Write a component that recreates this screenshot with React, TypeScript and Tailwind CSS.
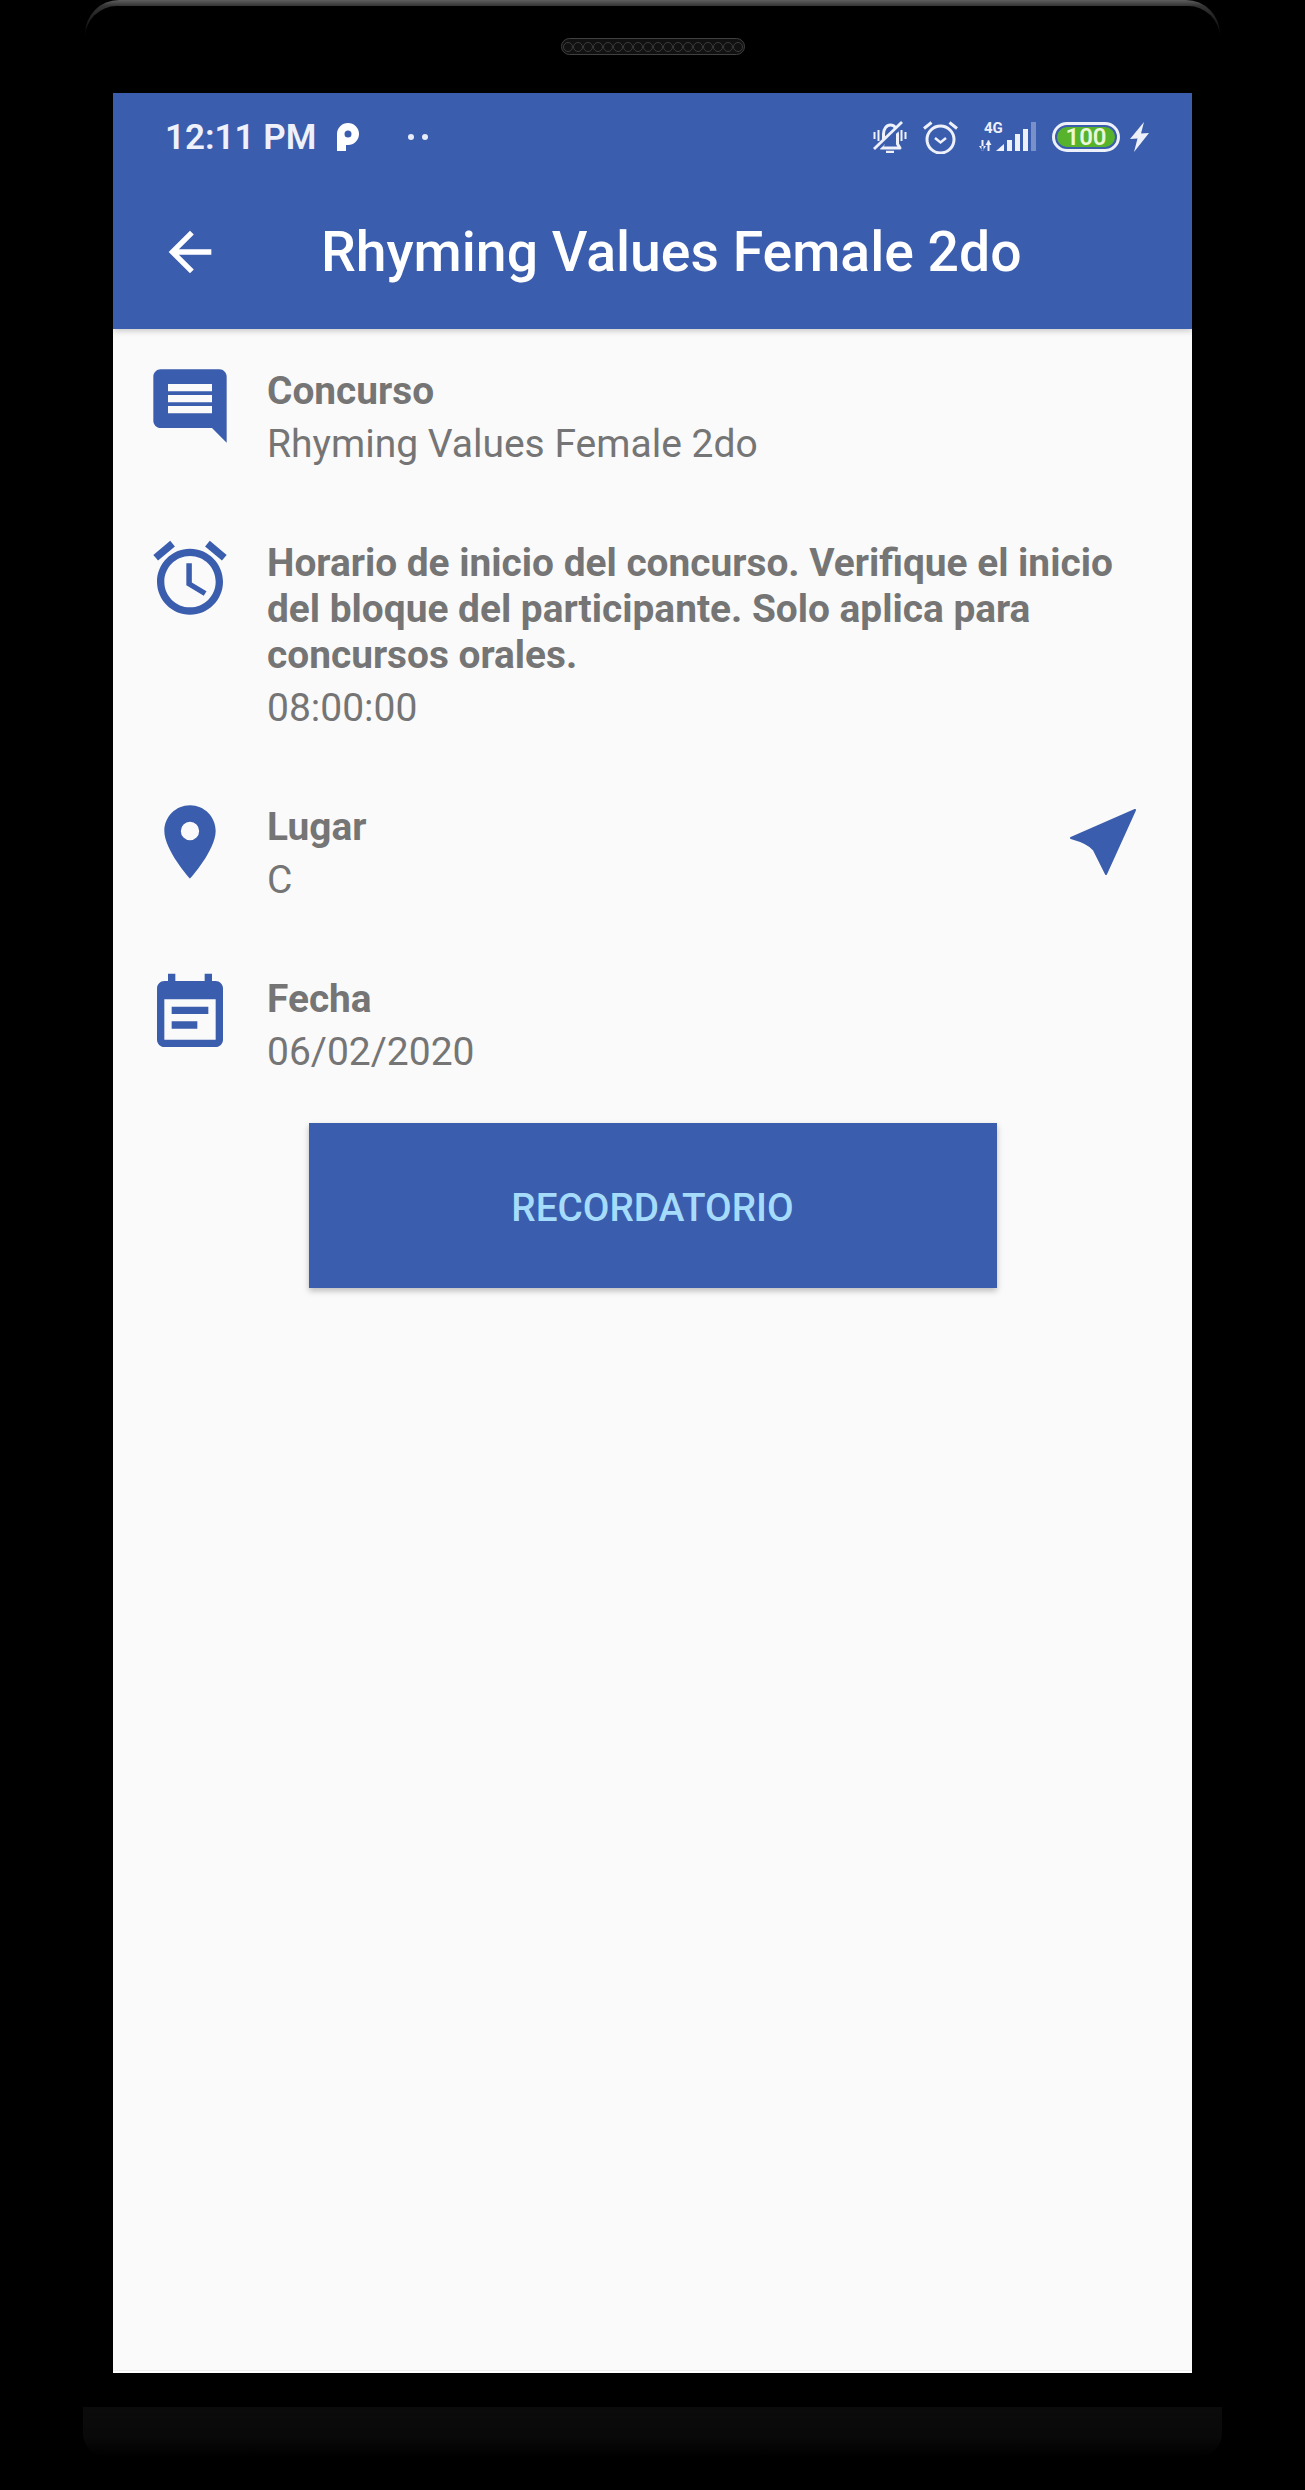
import React from 'react';

const BLUE = '#3b5dae';

const MaterialIcon: React.FC<{ d: string }> = ({ d }) => (
  <svg viewBox="0 0 24 24" className="w-[88px] h-[88px] shrink-0 -mt-[5px]" fill={BLUE}>
    <path d={d} />
  </svg>
);

const icons = {
  message: 'M20 2H4c-1.1 0-2 .9-2 2v12c0 1.1.9 2 2 2h14l4 4V4c0-1.1-.9-2-2-2zm-2 12H6v-2h12v2zm0-3H6V9h12v2zm0-3H6V6h12v2z',
  alarm: 'M22 5.72l-4.6-3.86-1.29 1.53 4.6 3.86L22 5.72zM7.88 3.39L6.6 1.86 2 5.71l1.29 1.53 4.59-3.85zM12.5 8H11v6l4.75 2.85.75-1.23-4-2.37V8zM12 4c-4.97 0-9 4.03-9 9s4.03 9 9 9 9-4.03 9-9-4.03-9-9-9zm0 16c-3.87 0-7-3.13-7-7s3.13-7 7-7 7 3.13 7 7-3.13 7-7 7z',
  place: 'M12 2C8.13 2 5 5.13 5 9c0 5.25 7 13 7 13s7-7.75 7-13c0-3.87-3.13-7-7-7zm0 9.5a2.5 2.5 0 0 1 0-5 2.5 2.5 0 0 1 0 5z',
  event: 'M17 10H7v2h10v-2zm2-7h-1V1h-2v2H8V1H6v2H5c-1.11 0-1.99.9-1.99 2L3 19c0 1.1.89 2 2 2h14c1.1 0 2-.9 2-2V5c0-1.1-.9-2-2-2zm0 16H5V8h14v11zm-5-5H7v2h7v-2z',
};

const InfoRow: React.FC<{ icon: string; title: string; value: string; children?: React.ReactNode }> = ({ icon, title, value, children }) => (
  <div className="flex items-start">
    <MaterialIcon d={icon} />
    <div className="ml-[33px] flex-1 pt-[1px]">
      <p className="text-[38.850px] leading-[46px] font-bold text-[#757575]">{title}</p>
      <p className="mt-[4px] text-[39px] leading-[52px] font-normal text-[#757575]">{value}</p>
    </div>
    {children}
  </div>
);

const StatusBar = () => (
  <div className="flex h-[88px] items-center pl-[52px] pr-[43px] text-white">
    <span className="pt-[2px] text-[35px] font-semibold text-[#eef1fa]">12:11 PM</span>
    <svg viewBox="0 0 22 28" className="ml-[21px] h-[28px] w-[22px]" fill="#fff">
      <path fillRule="evenodd" d="M0 28V11A11 11 0 1 1 11 22H9V28zM11 7.500a3.500 3.500 0 1 0 0 7 3.500 3.500 0 0 0 0-7z" />
    </svg>
    <div className="ml-[49px] flex gap-[8px]">
      <div className="h-[6px] w-[6px] rounded-full bg-[#e8ecf7]" />
      <div className="h-[6px] w-[6px] rounded-full bg-[#e8ecf7]" />
    </div>
    <div className="ml-auto flex items-center">
      {/* bell muted */}
      <svg viewBox="0 0 34 32" className="h-[32px] w-[34px]" fill="none" stroke="#eef1fa" strokeWidth="3">
        <path d="M8 27l2.500-4V13c0-5 3-9 7-9s7 4 7 9v10l2.500 4z" strokeLinejoin="round" />
        <path d="M13 31h8" strokeWidth="2.500" />
        <path d="M0 31L30 3" stroke={BLUE} strokeWidth="5" />
        <path d="M1 28L29 1" strokeWidth="2.800" />
        <path d="M1.500 11v7M5.500 9v11M28.500 9v11M32.500 11v7" strokeWidth="2" />
      </svg>
      {/* alarm */}
      <svg viewBox="0 0 35 33" className="ml-[16px] h-[33px] w-[35px]" fill="none" stroke="#eef1fa" strokeWidth="3">
        <circle cx="17.500" cy="18.500" r="13.500" />
        <path d="M12 17l5.500 4.500L23 17" strokeWidth="2.500" />
        <path d="M1 7.500L8.500 1.500M34 7.500L26.500 1.500" strokeWidth="3" />
      </svg>
      {/* 4G signal */}
      <svg viewBox="0 0 58 32" className="ml-[20px] h-[32px] w-[58px]" fill="#eef1fa">
        <text x="6" y="11.500" fontFamily="Roboto" fontWeight="700" fontSize="15">4G</text>
        <path d="M3.500 19h2v10.500h-2zM1 25l3.500 5 3.500-5zM9.500 19.500h2V30h-2zM7.500 24l3-5 3 5z" />
        <path d="M18 30l8-7v7z" />
        <rect x="29" y="19" width="5" height="11" />
        <rect x="37" y="13" width="5" height="17" />
        <rect x="45" y="8" width="5" height="22" />
        <rect x="53" y="1" width="5" height="29" fillOpacity="0.35" />
      </svg>
      {/* battery */}
      <div className="ml-[16px] flex h-[30px] w-[68px] items-center justify-center rounded-full border-[3px] border-[#eef1fa] p-[2px]">
        <div className="flex h-full w-full items-center justify-center rounded-full bg-[#57b32c] text-[24px] leading-none font-semibold text-[#eaf7d8]">100</div>
      </div>
      <svg viewBox="0 0 19 30" className="ml-[10px] h-[30px] w-[19px]" fill="#eef1fa">
        <path d="M14 0L0 17l7.500-.5L4 30l15-19-8 .5z" />
      </svg>
    </div>
  </div>
);

export default function App() {
  return (
    <div className="relative h-[2490px] w-[1305px] overflow-hidden bg-black font-['Roboto',sans-serif]">
      {/* device frame */}
      <div className="mx-[85px] rounded-t-[34px] bg-[linear-gradient(to_bottom,#5e5e5e_0,#333_6px,#000_40px)] pt-[6px]">
        <div className="rounded-t-[32px] bg-black px-[28px] pt-[32px]">
          {/* speaker */}
          <div className="flex h-[55px] items-start justify-center">
            <div className="flex h-[17px] w-[184px] items-center justify-center overflow-hidden rounded-full border border-[#404040] bg-[#111111]">
              {Array.from({ length: 18 }).map((_, i) => (
                <div key={i} className="h-[10px] w-[10px] shrink-0 rounded-full border border-[#3c3c3c]" />
              ))}
            </div>
          </div>
          {/* screen */}
          <div className="flex h-[2280px] flex-col bg-[#fafafa]">
            <header className="h-[236px] bg-[#3b5dae] shadow-[0_2px_6px_rgba(0,0,0,0.2)]">
              <StatusBar />
              <div className="flex h-[148px] items-center pb-[7px] pl-[45px]">
                <svg viewBox="0 0 24 24" className="h-[64px] w-[64px]" fill="#fff">
                  <path d="M20 11H7.830l5.590-5.590L12 4l-8 8 8 8 1.410-1.410L7.830 13H20v-2z" />
                </svg>
                <h1 className="ml-[99px] pt-[3px] text-[55.300px] font-medium text-white">Rhyming Values Female 2do</h1>
              </div>
            </header>
            <main className="flex flex-1 flex-col pt-[38px]">
              <div className="flex flex-col gap-[69px] pl-[33px] pr-[45px]">
                <InfoRow icon={icons.message} title="Concurso" value="Rhyming Values Female 2do" />
                <InfoRow
                  icon={icons.alarm}
                  title="Horario de inicio del concurso. Verifique el inicio del bloque del participante. Solo aplica para concursos orales."
                  value="08:00:00"
                />
                <InfoRow icon={icons.place} title="Lugar" value="C">
                  <svg viewBox="0 0 88 88" className="h-[88px] w-[88px] shrink-0 -mt-[5px]" fill={BLUE} stroke={BLUE} strokeWidth="2" strokeLinejoin="round">
                    <path d="M76 12L12 40Q30 45 35 52Q41 64 47 76z" />
                  </svg>
                </InfoRow>
                <InfoRow icon={icons.event} title="Fecha" value="06/02/2020" />
              </div>
              <button className="mx-auto mt-[45px] flex h-[165px] w-[688px] items-center justify-center bg-[#3b5dae] pt-[5px] text-[38.700px] font-medium text-[#a6dcfb] shadow-[0_3px_6px_rgba(0,0,0,0.25)]">
                RECORDATORIO
              </button>
              <div className="mt-auto h-[3px] border-t border-[#eeeeee] bg-white" />
            </main>
          </div>
        </div>
      </div>
      {/* reflection under the phone */}
      <div className="mx-[83px] mt-[34px] h-[50px] rounded-b-[24px] bg-[linear-gradient(to_bottom,#0b0b0b_0,#090909_60%,#000_100%)]" />
    </div>
  );
}
